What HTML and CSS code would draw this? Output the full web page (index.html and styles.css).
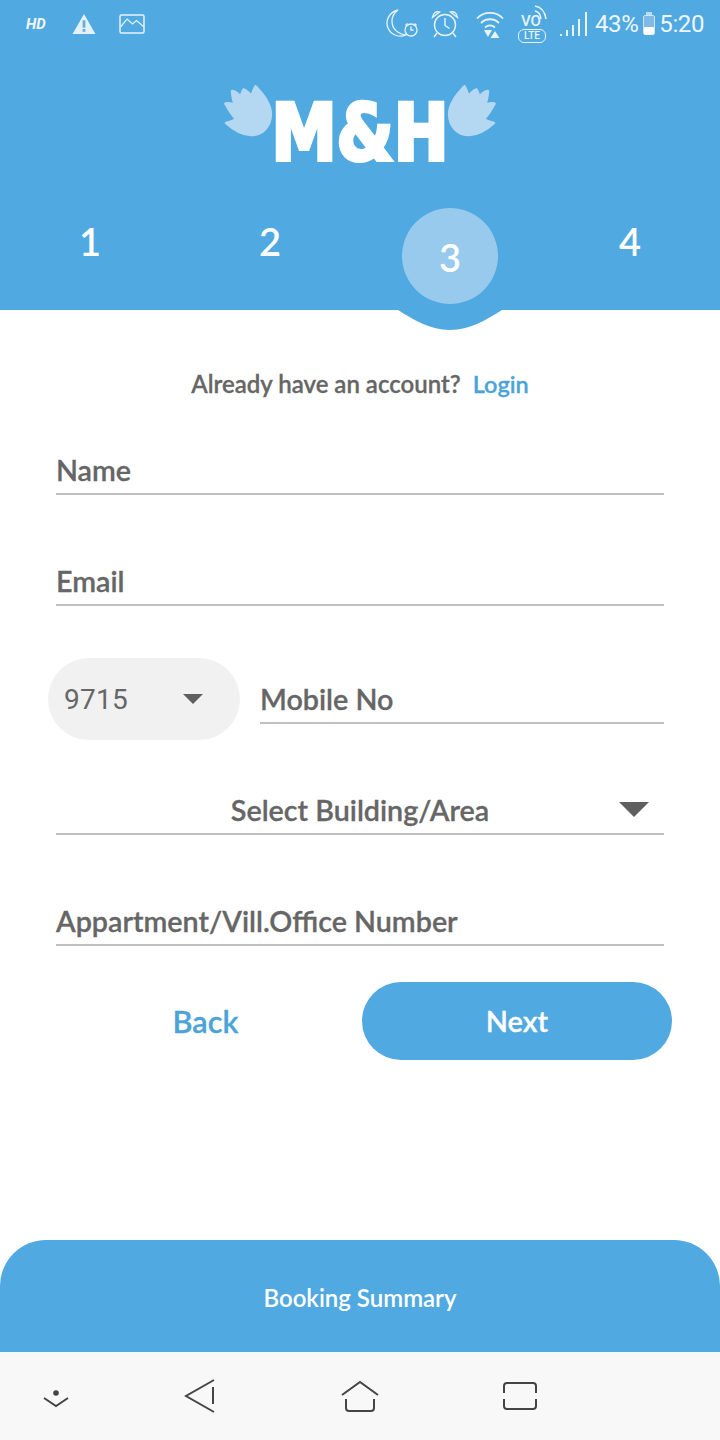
FILE: index.html
```html
<!DOCTYPE html>
<html>
<head>
    <meta charset="UTF-8">
    <meta name="viewport" content="width=device-width, initial-scale=1">
    <title>M&amp;H Booking</title>
    <link rel="stylesheet" href="styles.css">
</head>
<body>
<div class="screen">
    <header class="head">
        <div class="status">
            <div class="status-left">
                <span class="hd">HD</span>
                <svg class="ic-warn" viewBox="0 0 26 24"><path d="M13 1L25.500 23H.5z" fill="#e3f1fb"/><rect x="11.500" y="8" width="3" height="8" fill="#6fa9d4"/><rect x="11.500" y="17.500" width="3" height="3" fill="#6fa9d4"/></svg>
                <svg class="ic-pic" viewBox="0 0 26 20" fill="none" stroke="#e8f4fc"><rect x="1" y="1" width="24" height="18" rx="1.500" stroke-width="1.500"/><path d="M1.500 13L8 5l5.500 5 4-3.500L25 13" stroke-width="1.200"/></svg>
            </div>
            <div class="status-right">
                <svg class="ic-moon" viewBox="0 0 36 30" fill="none" stroke="#e8f4fc" stroke-width="1.300"><path d="M13 1C4 3 0 12 3 19c3 7 11 10 18 7-8-1-14-6-14-14 0-4 2-8 6-11z"/><circle cx="26" cy="21" r="6"/><path d="M26 17.500V21h2.500M20.500 16.500l2-2M31.500 16.500l-2-2"/></svg>
                <svg class="ic-alarm" viewBox="0 0 28 28" fill="none" stroke="#e8f4fc" stroke-width="1.400"><circle cx="14" cy="15" r="10.500"/><path d="M14 8v7.500l4.500 3M1.500 7.500C2 3 5 1 8.500 2zM26.500 7.500C26 3 23 1 19.500 2zM6 23l-3 4M22 23l3 4"/></svg>
                <svg class="ic-wifi" viewBox="0 0 28 30" fill="none" stroke="#e8f4fc" stroke-width="1.800"><path d="M1 9.500c7-7.500 19-7.500 26 0M5 14c5-5 13-5 18 0M9 18.500c3-2.500 7-2.500 10 0"/><path d="M9 22h8l-4 7z" transform="translate(-1 -1)" fill="#e8f4fc" stroke="none"/><path d="M19 22l4.500 7h-9z" fill="#e8f4fc" stroke="none"/></svg>
                <div class="volte">
                    <svg class="ic-waves" viewBox="0 0 28 22" fill="none" stroke="#e8f4fc" stroke-width="1.500"><path d="M15 1c6 1 10 6 11 13M15 6c3 .5 5.500 3 6 8"/></svg>
                    <span class="vo">VO</span>
                    <span class="lte">LTE</span>
                </div>
                <svg class="ic-signal" viewBox="0 0 28 26" fill="#e8f4fc"><rect x="0" y="23" width="2" height="2"/><rect x="6" y="19" width="2" height="6"/><rect x="12" y="14" width="2" height="11"/><rect x="18" y="8" width="2" height="17"/><rect x="25" y="1" width="2" height="24"/></svg>
                <span class="pct">43%</span>
                <svg class="ic-batt" viewBox="0 0 14 24"><rect x="4" y="0" width="6" height="3" fill="#e8f4fc" opacity=".7"/><rect x="1.500" y="3.500" width="11" height="19" rx="1.500" fill="#7fb9e4" stroke="#cfe6f7"/><rect x="2" y="15" width="10" height="7.500" rx="1" fill="#fff"/></svg>
                <span class="clock">5:20</span>
            </div>
        </div>
        <div class="logo">
            <svg class="hand" viewBox="70 40 155 165"><path d="M170 50C190 72 216 100 216 135C214 172 190 196 155 196C125 194 102 178 82 160C92 157 103 155 112 148C100 138 90 120 80 102C90 100 100 102 108 106C104 92 100 80 100 64C108 64 118 72 126 82C127 74 130 68 134 60C142 62 150 70 158 80C160 72 165 60 170 50Z" fill="#b5d8f2" stroke="#b5d8f2" stroke-width="8" stroke-linejoin="round"/></svg>
            <span class="logo-text">M&amp;H</span>
            <svg class="hand hand-r" viewBox="70 40 155 165"><path d="M170 50C190 72 216 100 216 135C214 172 190 196 155 196C125 194 102 178 82 160C92 157 103 155 112 148C100 138 90 120 80 102C90 100 100 102 108 106C104 92 100 80 100 64C108 64 118 72 126 82C127 74 130 68 134 60C142 62 150 70 158 80C160 72 165 60 170 50Z" fill="#b5d8f2" stroke="#b5d8f2" stroke-width="8" stroke-linejoin="round"/></svg>
        </div>
        <div class="steps">
            <div class="step">1</div>
            <div class="step">2</div>
            <div class="step step-on"><span class="step-dot">3</span></div>
            <div class="step">4</div>
        </div>
        <svg class="bump" viewBox="0 0 104 20"><path d="M0 0C16 10 32 20 52 20C72 20 88 10 104 0Z" fill="#51a9e1"/></svg>
    </header>

    <main class="form">
        <p class="have">Already have an account? <a class="login">Login</a></p>

        <div class="field"><span class="lbl">Name</span></div>
        <div class="field"><span class="lbl">Email</span></div>

        <div class="phone">
            <div class="code"><span class="code-num">9715</span><i class="caret"></i></div>
            <div class="field field-mob"><span class="lbl">Mobile No</span></div>
        </div>

        <div class="field field-sel"><span class="lbl">Select Building/Area</span><i class="caret caret-big"></i></div>
        <div class="field"><span class="lbl">Appartment/Vill.Office Number</span></div>

        <div class="actions">
            <a class="back">Back</a>
            <a class="next">Next</a>
        </div>
    </main>

    <div class="summary">Booking Summary</div>

    <nav class="navbar">
        <svg class="nav-ic nav-down" viewBox="0 0 28 20" fill="none" stroke="#444" stroke-width="2"><circle cx="14" cy="5" r="2.800" fill="#444" stroke="none"/><path d="M2 10l12 8 12-8"/></svg>
        <svg class="nav-ic nav-back" viewBox="0 0 31 34" fill="none" stroke="#444" stroke-width="2"><path d="M30 1L2 17l28 16M29 8v17"/></svg>
        <svg class="nav-ic nav-home" viewBox="0 0 38 34" fill="none" stroke="#444" stroke-width="2"><path d="M1 15L19 2l18 13M5 19v9q0 3 3 3h22q3 0 3-3v-9"/></svg>
        <svg class="nav-ic nav-rec" viewBox="0 0 34 28" fill="none" stroke="#444" stroke-width="2"><path d="M1 11V4q0-3 3-3h26q3 0 3 3v7M1 17v7q0 3 3 3h26q3 0 3-3v-7"/></svg>
    </nav>
</div>
</body>
</html>
```

FILE: styles.css
```css
*{
    box-sizing:border-box;
}
body{
    margin:0;
    font-family:"Lato",sans-serif;
    background:#fff;
}
.screen{
    width:720px;
    height:1440px;
    display:flex;
    flex-direction:column;
    overflow:hidden;
}
.head{
    position:relative;
    height:310px;
    flex:none;
    background:#51a9e1;
    color:#fff;
}
.status{
    height:48px;
    display:flex;
    justify-content:space-between;
    align-items:center;
    padding:0 16px 0 26px;
}
.status-left,.status-right{
    display:flex;
    align-items:center;
}
.hd{
    width:20px;
    margin-right:26px;
    font:italic 700 15px "Roboto",sans-serif;
    color:#eef7fd;
}
.ic-warn{
    width:24px;
    height:22px;
    margin-right:23px;
}
.ic-pic{
    width:26px;
    height:20px;
}
.ic-moon{
    width:36px;
    height:30px;
    margin-right:10px;
}
.ic-alarm{
    width:28px;
    height:28px;
    margin-right:17px;
}
.ic-wifi{
    width:28px;
    height:30px;
    margin-right:14px;
}
.volte{
    position:relative;
    width:30px;
    height:38px;
    margin-right:12px;
    color:#e8f4fc;
}
.ic-waves{
    position:absolute;
    left:2px;
    top:0;
    width:28px;
    height:22px;
}
.vo{
    position:absolute;
    left:3px;
    top:9px;
    font:500 15px/15px "Roboto",sans-serif;
}
.lte{
    position:absolute;
    left:0;
    bottom:0;
    width:28px;
    height:14px;
    border:1.500px solid #e8f4fc;
    border-radius:6px;
    font:500 10px/11px "Roboto",sans-serif;
    text-align:center;
}
.ic-signal{
    width:28px;
    height:26px;
    margin-right:7px;
}
.pct,.clock{
    font:400 24px "Roboto",sans-serif;
    color:#eef7fd;
    letter-spacing:-.4px;
}
.ic-batt{
    width:14px;
    height:24px;
    margin:0 3px 0 4px;
}
.logo{
    height:152px;
    padding-top:35px;
    display:flex;
    justify-content:center;
    align-items:flex-start;
}
.hand{
    width:52px;
    height:55px;
    flex:none;
}
.hand-r{
    transform:scaleX(-1);
}
.logo-text{
    width:172px;
    margin-top:12px;
    font:700 78px/76px "DejaVu Sans",sans-serif;
    white-space:nowrap;
    display:flex;
    justify-content:center;
    transform:scale(.84,1);
    -webkit-text-stroke:4px #fff;
}
.steps{
    display:grid;
    grid-template-columns:repeat(4,180px);
    margin-top:8px;
}
.step{
    height:96px;
    padding-top:11px;
    text-align:center;
    font:600 38px/44px "Lato",sans-serif;
}
.step-on{
    display:flex;
    justify-content:center;
    padding-top:0;
}
.step-dot{
    width:96px;
    height:96px;
    padding-top:27px;
    border-radius:50%;
    background:#98caee;
}
.bump{
    position:absolute;
    left:398px;
    top:310px;
    width:104px;
    height:20px;
}
.form{
    flex:1;
    padding:0 56px;
    color:#666;
    -webkit-text-stroke:.3px #666;
}
.have{
    margin:58px 0 0;
    text-align:center;
    font-size:24px;
    line-height:32px;
    font-weight:600;
    white-space:pre-wrap;
}
.login{
    margin-left:6px;
    font-size:23.500px;
    color:#4ba3d8;
    -webkit-text-stroke:.3px #4ba3d8;
}
.field{
    height:48px;
    margin-top:63px;
    border-bottom:2px solid #c0c0c0;
    font-size:28.700px;
    line-height:46px;
    font-weight:600;
}
.have + .field{
    margin-top:47px;
}
.lbl{
    display:block;
    white-space:nowrap;
}
.phone{
    display:flex;
    align-items:flex-start;
    margin:52px 0 0 -8px;
}
.code{
    width:192px;
    height:82px;
    flex:none;
    display:flex;
    align-items:center;
    padding:0 37px 0 16px;
    justify-content:space-between;
    border-radius:41px;
    background:#f1f1f1;
    font:400 28px "Roboto",sans-serif;
    letter-spacing:.3px;
    color:#666;
    -webkit-text-stroke:0;
}
.caret{
    width:0;
    height:0;
    border-left:10.500px solid transparent;
    border-right:10.500px solid transparent;
    border-top:10px solid #5f5f5f;
}
.field-mob{
    flex:1;
    margin:18px 0 0 20px;
}
.phone + .field{
    margin-top:47px;
}
.field-sel{
    display:flex;
    justify-content:center;
    position:relative;
}
.caret-big{
    position:absolute;
    right:15px;
    top:15px;
    border-left-width:15px;
    border-right-width:15px;
    border-top-width:15px;
}
.actions{
    display:flex;
    align-items:center;
    margin:36px -8px 0 0;
}
.back{
    width:299px;
    margin-right:7px;
    text-align:center;
    font-size:30.600px;
    font-weight:600;
    color:#4ba3d8;
    -webkit-text-stroke:.3px #4ba3d8;
}
.next{
    width:310px;
    height:78px;
    border-radius:39px;
    background:#51a9e1;
    color:#fff;
    text-align:center;
    font-size:29px;
    font-weight:600;
    line-height:78px;
    -webkit-text-stroke:.3px #fff;
}
.summary{
    height:112px;
    flex:none;
    border-radius:46px 46px 0 0;
    background:#51a9e1;
    color:#fff;
    text-align:center;
    font-size:24px;
    font-weight:600;
    line-height:116px;
}
.navbar{
    position:relative;
    height:88px;
    flex:none;
    background:#f8f8f8;
    border-top:5px solid #f3faf5;
}
.nav-ic{
    position:absolute;
}
.nav-down{
    left:42px;
    top:31px;
    width:28px;
    height:20px;
}
.nav-back{
    left:184px;
    top:22px;
    width:31px;
    height:34px;
}
.nav-home{
    left:341px;
    top:23px;
    width:38px;
    height:34px;
}
.nav-rec{
    left:503px;
    top:25px;
    width:34px;
    height:28px;
}
```
